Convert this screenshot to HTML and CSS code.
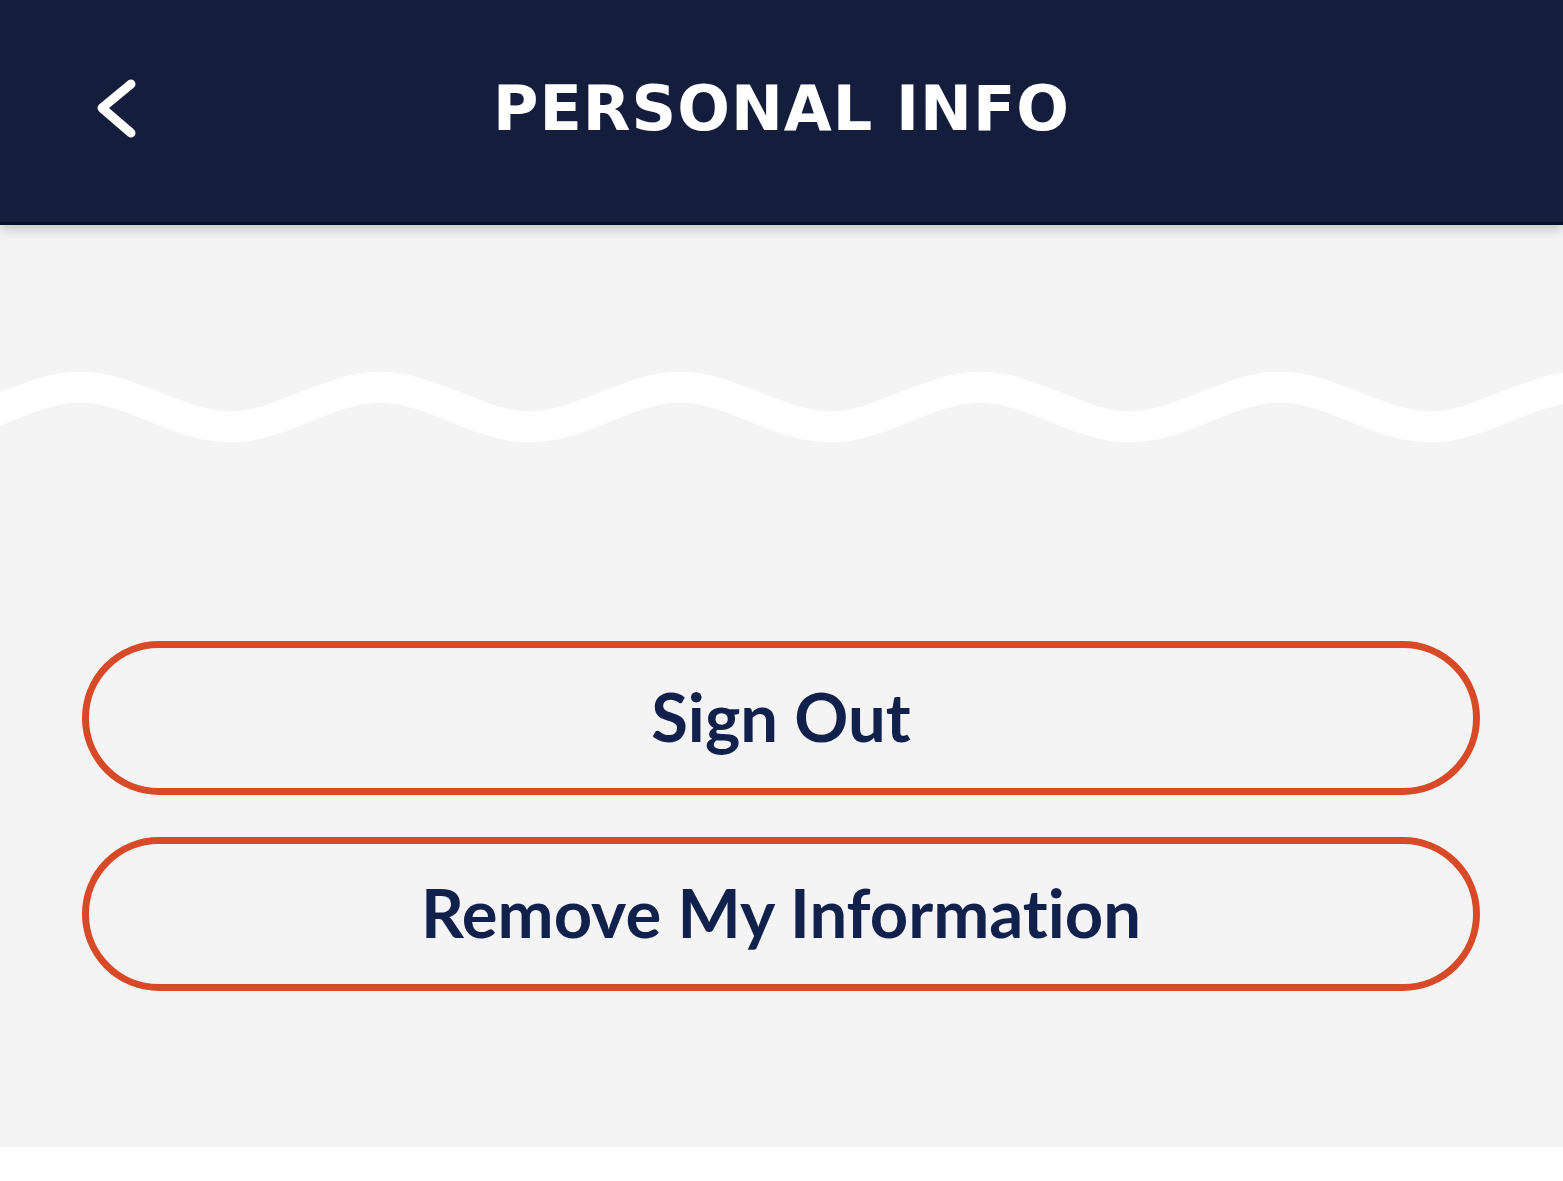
FILE: index.html
```html
<!DOCTYPE html>
<html>
<head>
<meta charset="utf-8">
<link rel="stylesheet" href="styles.css">
</head>
<body>
<div class="screen">
  <header class="topbar">
    <div class="back" aria-label="Back">
      <svg width="50" height="70" viewBox="0 0 50 70"><path d="M39 10 L10 34 L39 59" fill="none" stroke="#ffffff" stroke-width="9" stroke-linecap="round" stroke-linejoin="round"/></svg>
    </div>
    <h1 class="title">PERSONAL INFO</h1>
  </header>
  <svg class="wave" width="1563" height="120" viewBox="0 340 1563 120" preserveAspectRatio="none">
    <path d="M -70 427 C -20 427 30 387 80 387 S 180 427 230 427 S 330 387 380 387 S 480 427 530 427 S 630 387 680 387 S 780 427 830 427 S 930 387 980 387 S 1080 427 1130 427 S 1230 387 1280 387 S 1380 427 1430 427 S 1530 387 1580 387 S 1680 427 1730 427" fill="none" stroke="#ffffff" stroke-width="31"/>
  </svg>
  <div class="actions">
    <button class="pill">Sign Out</button>
    <button class="pill">Remove My Information</button>
  </div>
</div>
</body>
</html>
```
FILE: styles.css
```css
html, body {
  margin: 0;
  padding: 0;
  background: #ffffff;
}
.screen {
  width: 1563px;
  height: 1147px;
  background: #f4f4f4;
  overflow: hidden;
}
.topbar {
  position: relative;
  height: 222px;
  background: #141e3c;
  border-bottom: 3px solid #0a1028;
  box-shadow: 0 5px 10px rgba(0,0,0,0.18);
  display: flex;
  align-items: center;
  justify-content: center;
}
.back {
  position: absolute;
  left: 92px;
  top: 74px;
  width: 50px;
  height: 70px;
}
.back svg { display: block; }
.title {
  margin: 0;
  margin-top: -4px;
  color: #ffffff;
  font-family: "DejaVu Sans", sans-serif;
  font-weight: bold;
  font-size: 62px;
  letter-spacing: 1px;
  line-height: 1;
}
.wave {
  display: block;
  margin-top: 115px;
}
.actions {
  margin-top: 181px;
  padding-left: 82px;
  display: flex;
  flex-direction: column;
  gap: 42px;
}
.pill {
  width: 1398px;
  height: 154px;
  box-sizing: border-box;
  border: 7px solid #d84a27;
  border-radius: 77px;
  background: transparent;
  color: #12214c;
  font-family: "Lato", sans-serif;
  font-weight: 700;
  font-size: 67px;
  font-variant-ligatures: none;
  padding: 0 0 4px;
}
```
